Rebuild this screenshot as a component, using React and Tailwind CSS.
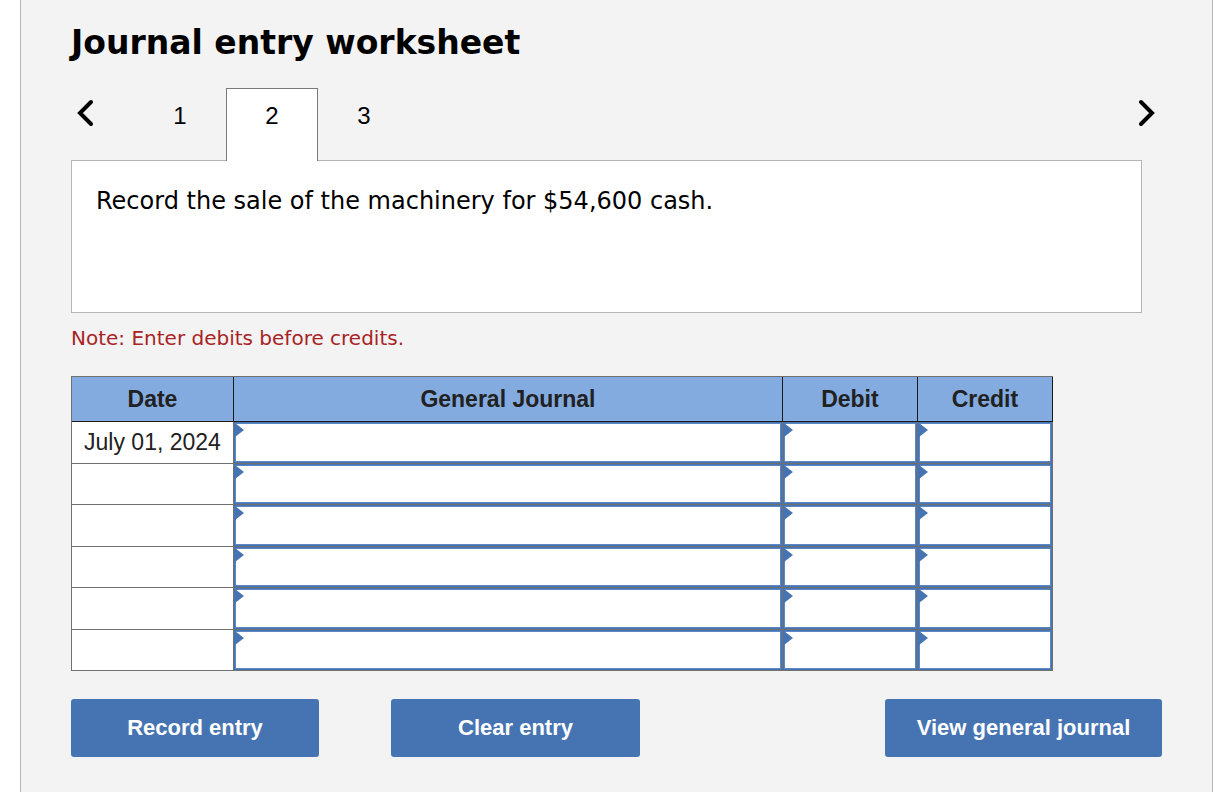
import { useState } from "react";

const ENTRIES = ["July 01, 2024", "", "", "", "", ""];
const FIELDS = ["General Journal", "Debit", "Credit"];
const STEPS = [1, 2, 3];

function Chevron({ points }) {
  return (
    <svg
      viewBox="0 0 18 28"
      className="h-7 w-[18px] overflow-visible"
      fill="none"
      stroke="currentColor"
      strokeWidth="4"
      strokeLinecap="round"
      aria-hidden="true"
    >
      <polyline points={points} />
    </svg>
  );
}

function EntryCell({ label }) {
  return (
    <td className="relative border-r border-b border-[#707070] p-0">
      <input
        type="text"
        aria-label={label}
        className="block h-10 w-full border border-[#4674b3] bg-white px-3 text-[23px] text-[#212121] inset-ring inset-ring-[#5b87c4] outline-none group-odd:h-[41px]"
      />
      {/* corner marker for an editable cell */}
      <svg
        viewBox="0 0 10 14"
        className="pointer-events-none absolute top-px left-0 h-[14px] w-[10px]"
        aria-hidden="true"
      >
        <path d="M0 0 L1 0 L10 7 L1 14 L0 14 Z" fill="#4674b3" />
      </svg>
    </td>
  );
}

function ActionButton({ children, className }) {
  return (
    <button
      type="button"
      className={`h-[58px] rounded-[3px] bg-[#4674b3] pb-0.5 text-[22px] font-bold text-white ${className}`}
    >
      {children}
    </button>
  );
}

export default function App() {
  const [step, setStep] = useState(2);

  return (
    <main className="mr-[17px] ml-5 min-h-screen border-x border-[#b5b5b5] bg-[#f3f3f3] px-[50px] pt-5 pb-8 font-['Liberation_Sans',Arial,sans-serif] text-black">
      <h1 className="font-['DejaVu_Sans',Verdana,sans-serif] text-[33px] leading-[46px] font-bold">
        Journal entry worksheet
      </h1>

      <div className="mt-[22px] flex items-start">
        <button
          type="button"
          aria-label="Previous entry"
          onClick={() => setStep(Math.max(1, step - 1))}
          className="flex h-[50px] w-[63px] items-center pl-1"
        >
          <Chevron points="16,3 5,14 16,25" />
        </button>
        <div role="tablist" className="flex">
          {STEPS.map((n) => (
            <button
              key={n}
              type="button"
              role="tab"
              aria-selected={n === step}
              onClick={() => setStep(n)}
              className={`relative h-[73px] w-[92px] border border-b-0 pb-[18px] text-2xl ${
                n === step ? "z-10 border-[#7a7a7a] bg-white" : "border-transparent"
              }`}
            >
              {n}
            </button>
          ))}
        </div>
        <button
          type="button"
          aria-label="Next entry"
          onClick={() => setStep(Math.min(3, step + 1))}
          className="ml-auto flex h-[50px] w-[63px] items-center justify-end pr-1"
        >
          <Chevron points="1,3 12,14 1,25" />
        </button>
      </div>

      <section className="-mt-px mr-5 min-h-[153px] border border-[#b5b5b5] bg-white px-6 pt-6">
        <p className="font-['DejaVu_Sans',Verdana,sans-serif] text-2xl">
          Record the sale of the machinery for $54,600 cash.
        </p>
      </section>

      <p className="mt-[11px] font-['DejaVu_Sans',Verdana,sans-serif] text-xl text-[#a82424]">
        Note: Enter debits before credits.
      </p>

      <table className="mt-6 w-[90%] table-fixed border-separate border-spacing-0 border-t border-l border-[#707070] text-[23px] text-[#212121]">
        <thead>
          <tr className="h-[45px] bg-[#83abe0]">
            <th className="w-[162px] border-r border-b border-[#1a1a1a] p-0">Date</th>
            <th className="border-r border-b border-[#1a1a1a] p-0">General Journal</th>
            <th className="w-[135px] border-r border-b border-[#1a1a1a] p-0">Debit</th>
            <th className="w-[135px] border-r border-b border-[#1a1a1a] p-0">Credit</th>
          </tr>
        </thead>
        <tbody>
          {ENTRIES.map((date, i) => (
            <tr key={i} className="group bg-white">
              <td className="border-r border-b border-[#707070] p-0 text-center">{date}</td>
              {FIELDS.map((field) => (
                <EntryCell key={field} label={`${field}, line ${i + 1}`} />
              ))}
            </tr>
          ))}
        </tbody>
      </table>

      <div className="mt-7 flex">
        <ActionButton className="w-[248px]">Record entry</ActionButton>
        <ActionButton className="ml-[72px] w-[249px]">Clear entry</ActionButton>
        <ActionButton className="ml-auto w-[277px]">View general journal</ActionButton>
      </div>
    </main>
  );
}
